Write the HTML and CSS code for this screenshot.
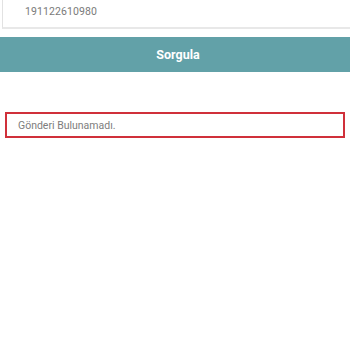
FILE: index.html
```html
<!DOCTYPE html>
<html>
<head>
<meta charset="utf-8">
<link rel="stylesheet" href="styles.css">
</head>
<body>
<div class="page">
  <div class="field">
    <span class="field-value">191122610980</span>
  </div>
  <button class="query-btn">Sorgula</button>
  <div class="alert">Gönderi Bulunamadı.</div>
</div>
</body>
</html>
```
FILE: styles.css
```css
html, body {
  margin: 0;
  padding: 0;
  background: #ffffff;
}
.page {
  font-family: Roboto, "Noto Sans", sans-serif;
  width: 350px;
  height: 350px;
  overflow: hidden;
}
.field {
  margin-top: -10px;
  margin-left: 2px;
  height: 39px;
  box-sizing: border-box;
  border-left: 1px solid #e2e2e2;
  border-bottom: 2px solid #e8e8e8;
  padding: 0 0 0 22px;
  display: flex;
  align-items: flex-end;
  padding-bottom: 9px;
}
.field-value {
  font-size: 10.5px;
  color: #7a7a7a;
  letter-spacing: 0.1px;
}
.query-btn {
  display: block;
  width: 100%;
  margin-top: 8px;
  height: 35px;
  border: none;
  background: #62a1a8;
  color: #ffffff;
  font-family: Roboto, "Noto Sans", sans-serif;
  font-weight: 700;
  font-size: 12.5px;
  padding: 0 0 0 6px;
}
.alert {
  margin: 40px 5px 0 5px;
  height: 26px;
  box-sizing: border-box;
  border: 2px solid #d0303a;
  padding: 0 0 0 11px;
  display: flex;
  align-items: center;
  font-size: 10.5px;
  color: #7d7d7d;
}
```
